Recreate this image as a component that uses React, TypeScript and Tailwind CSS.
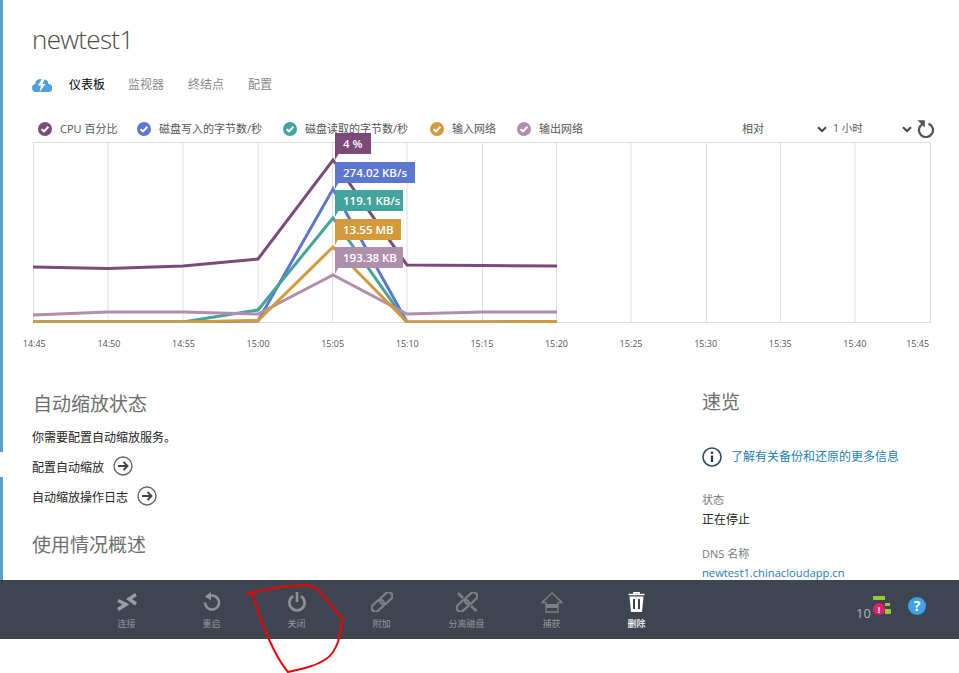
const TIMES = ['14:45', '14:50', '14:55', '15:00', '15:05', '15:10', '15:15', '15:20', '15:25', '15:30', '15:35', '15:40'];
const GRID_X = [108, 183, 258, 332.5, 407, 482.5, 556.5, 631, 706.5, 780.5, 855];

const LEGEND = [
  { label: 'CPU 百分比', cls: 'bg-[#7b4a78]', width: 'w-[99px]' },
  { label: '磁盘写入的字节数/秒', cls: 'bg-[#5b77cf]', width: 'w-[146px]' },
  { label: '磁盘读取的字节数/秒', cls: 'bg-[#42a49c]', width: 'w-[147px]' },
  { label: '输入网络', cls: 'bg-[#d29a3b]', width: 'w-[87px]' },
  { label: '输出网络', cls: 'bg-[#b08fad]', width: 'w-[86px]' },
];

const SERIES = [
  { color: '#7b4a78', points: '33,267 108,268.5 183,266 258,259 333,160 407,265 482,265.5 557,266' },
  { color: '#5b77cf', points: '33,322 108,322 183,322 258,321 333,189 407,322 482,322 557,321.5' },
  { color: '#42a49c', points: '33,322 108,322 183,322 258,310 333,218 407,323 482,322.5 557,322' },
  { color: '#b08fad', points: '33,315 108,312 183,312 258,314 333,275 407,314 482,312 557,312' },
  { color: '#d29a3b', points: '33,322 108,322 183,322 258,320.5 333,247 407,322 482,322 557,321.5' },
];

const TIPS = [
  { text: '4 %', top: 'top-[-9px]', width: 'w-[36px]', cls: 'bg-[#7b4a78]' },
  { text: '274.02 KB/s', top: 'top-[20px]', width: 'w-[80px]', cls: 'bg-[#5b77cf]' },
  { text: '119.1 KB/s', top: 'top-[48px]', width: 'w-[68px]', cls: 'bg-[#42a49c]' },
  { text: '13.55 MB', top: 'top-[77px]', width: 'w-[66px]', cls: 'bg-[#d29a3b]' },
  { text: '193.38 KB', top: 'top-[105px]', width: 'w-[68px]', cls: 'bg-[#b08fad]' },
];

function Check({ className }: { className: string }) {
  return (
    <span className={`flex h-[14px] w-[14px] shrink-0 items-center justify-center rounded-full ${className}`}>
      <svg viewBox="0 0 14 14" className="h-[14px] w-[14px]">
        <path d="M3.6 7.2 6 9.4 10.4 4.8" fill="none" stroke="#fff" strokeWidth="2.1" />
      </svg>
    </span>
  );
}

function Chevron() {
  return (
    <svg viewBox="0 0 10 7" className="h-[7px] w-[10px] shrink-0">
      <path d="M1 1.2 5 5 9 1.2" fill="none" stroke="#444" strokeWidth="2" />
    </svg>
  );
}

function ArrowCircle() {
  return (
    <svg viewBox="0 0 20 20" className="h-[20px] w-[20px]">
      <circle cx="10" cy="10" r="9" fill="none" stroke="#666" strokeWidth="1.4" />
      <path d="M5 10H14M10.5 6 14.5 10 10.5 14" fill="none" stroke="#444" strokeWidth="1.9" />
    </svg>
  );
}

function ChainLinks() {
  return (
    <g fill="none" stroke="#7c7f85" strokeWidth="2.3" transform="rotate(-42 11 10)">
      <rect x="-1.5" y="6.2" width="14" height="7.6" rx="3.8" />
      <rect x="9.5" y="6.2" width="14" height="7.6" rx="3.8" />
    </g>
  );
}

function ToolItem({ label, active, children }: { label: string; active?: boolean; children: React.ReactNode }) {
  return (
    <div className="flex w-[85px] flex-col items-center">
      <div className="flex h-[24px] w-[85px] items-center justify-center">{children}</div>
      <span className={`mt-[4px] text-[9px] leading-[12px] ${active ? 'font-medium text-white' : 'text-[#94979d]'}`}>{label}</span>
    </div>
  );
}

export default function App() {
  return (
    <div className="relative h-[673px] w-[959px] overflow-hidden bg-white font-['Open_Sans','Noto_Sans_CJK_SC',sans-serif]">
      <div className="h-[580px] overflow-hidden border-l-[3px] border-[#58a2c9] pl-[29px]">
        <h1 className="pt-[21px] text-[26px] font-light leading-[36px] tracking-[-0.7px] text-[#4a4a4a]">newtest1</h1>

        {/* Tabs */}
        <nav className="mt-[20px] flex h-[16px] items-center text-[12px] text-[#8a8a8a]">
          <svg viewBox="0 0 20 14" className="h-[14px] w-[20px]">
            <path d="M4 14a4 4 0 0 1-.8-7.9A5 5 0 0 1 8 1c1 0 1.8.2 2.6.7A4.5 4.5 0 0 1 16.5 6 4 4 0 0 1 16 14Z" fill="#4f9fd8" />
            <path d="M10.5 0 6 7.5h3L7.5 14 13.5 6h-3l2.5-6Z" fill="#fff" />
          </svg>
          <span className="ml-[17px] text-black">仪表板</span>
          <span className="ml-[23px]">监视器</span>
          <span className="ml-[24px]">终结点</span>
          <span className="ml-[24px]">配置</span>
        </nav>

        {/* Legend */}
        <div className="ml-[6px] mt-[28px] flex h-[16px] items-center text-[11px] text-[#555]">
          {LEGEND.map((item) => (
            <div key={item.label} className={`flex items-center gap-[8px] ${item.width}`}>
              <Check className={item.cls} />
              <span>{item.label}</span>
            </div>
          ))}
          <span className="ml-[139px] w-[75px] shrink-0">相对</span>
          <Chevron />
          <span className="ml-[6px] w-[69px] shrink-0 text-[10.5px]">1 小时</span>
          <Chevron />
          <svg viewBox="0 0 17 18" className="ml-[5px] h-[18px] w-[17px] shrink-0">
            <path d="M5.2 4.2A7 7 0 1 0 11.5 3.6" fill="none" stroke="#555" strokeWidth="2.3" />
            <path d="M0.5 0.3 7.8 0.3 7.8 7.5Z" fill="#555" />
          </svg>
        </div>

        {/* Chart */}
        <div className="relative ml-px mt-[5px] h-[181px] w-[898px]">
          <svg viewBox="33 142 898 181" className="block h-[181px] w-[898px]">
            <rect x="33.5" y="142.5" width="897" height="180" fill="none" stroke="#dedede" />
            {GRID_X.map((x) => (
              <line key={x} x1={x} x2={x} y1="142" y2="322" stroke="#dedede" />
            ))}
            {SERIES.map((s) => (
              <polyline key={s.color} points={s.points} fill="none" stroke={s.color} strokeWidth="3" />
            ))}
            <path d="M335 153 339 153 335 160Z" fill="#7b4a78" />
            <path d="M335 182 339 182 335 189Z" fill="#5b77cf" />
            <path d="M335 210 339 210 335 217Z" fill="#42a49c" />
            <path d="M335 238 339 238 335 245Z" fill="#d29a3b" />
            <path d="M335 267 339 267 335 274Z" fill="#b08fad" />
          </svg>
          {TIPS.map((tip) => (
            <div
              key={tip.text}
              className={`absolute left-[302px] h-[21px] pl-[8px] text-[11.5px] font-semibold leading-[21px] text-white ${tip.top} ${tip.width} ${tip.cls}`}
            >
              {tip.text}
            </div>
          ))}
        </div>

        {/* Time axis */}
        <div className="ml-[-35px] mt-[14px] flex h-[14px] text-[9px] leading-[14px] text-[#555]">
          {TIMES.map((t) => (
            <span key={t} className="w-[74.6px] shrink-0 text-center">{t}</span>
          ))}
          <span className="w-[51px] shrink-0 text-center">15:45</span>
        </div>

        <div className="mt-[40px] flex">
          <div className="w-[670px]">
            <h2 className="pl-px text-[19px] leading-[26px] text-[#6e6e6e]">自动缩放状态</h2>
            <p className="mt-[13px] text-[12px] leading-[16px] text-[#222]">你需要配置自动缩放服务。</p>
            <div className="mt-[10px] flex h-[20px] items-center gap-[9px] text-[12px] text-[#222]">
              <span className="pt-[3px]">配置自动缩放</span>
              <ArrowCircle />
            </div>
            <div className="mt-[10px] flex h-[20px] items-center gap-[9px] text-[12px] text-[#222]">
              <span className="pt-[3px]">自动缩放操作日志</span>
              <ArrowCircle />
            </div>
            <h2 className="mt-[26px] text-[19px] leading-[26px] text-[#6e6e6e]">使用情况概述</h2>
          </div>
          <div className="-mt-[2px] flex-1">
            <h2 className="text-[19px] leading-[26px] text-[#6e6e6e]">速览</h2>
            <div className="mt-[32px] flex h-[20px] items-center gap-[9px] text-[12px] text-[#1c80b6]">
              <svg viewBox="0 0 20 20" className="h-[20px] w-[20px]">
                <circle cx="10" cy="10" r="9" fill="none" stroke="#2f4a5e" strokeWidth="1.6" />
                <circle cx="10" cy="5.8" r="1.3" fill="#22384a" />
                <path d="M10 8.5V15" stroke="#22384a" strokeWidth="2.2" />
              </svg>
              <span>了解有关备份和还原的更多信息</span>
            </div>
            <p className="mt-[25px] text-[11px] leading-[16px] text-[#777]">状态</p>
            <p className="mt-[4px] text-[12px] leading-[16px] text-[#222]">正在停止</p>
            <p className="mt-[18px] text-[11px] leading-[16px] text-[#777]">DNS 名称</p>
            <p className="mt-[3px] text-[11.2px] leading-[16px] text-[#1c80b6]">newtest1.chinacloudapp.cn</p>
          </div>
        </div>
      </div>

      {/* notch in the left edge */}
      <div className="absolute left-0 top-[452px] h-[25px] w-[3px] bg-white" />

      {/* Toolbar */}
      <div className="flex h-[59px] items-start bg-[#3e4551] pl-[84px] pt-[10px]">
        <ToolItem label="连接">
          <svg viewBox="0 0 20 18" className="h-[18px] w-[20px]">
            <path d="M1 7.5 9 11.5 1 16.5M19 1.5 12 6 19 11" fill="none" stroke="#9a9da3" strokeWidth="3.4" />
          </svg>
        </ToolItem>
        <ToolItem label="重启">
          <svg viewBox="0 0 18 20" className="h-[20px] w-[18px]">
            <path d="M5 4.8A7 7 0 1 1 2 10.5" fill="none" stroke="#8f9297" strokeWidth="2.6" />
            <path d="M8 0 8 8.5 2 4.5Z" fill="#8f9297" />
          </svg>
        </ToolItem>
        <ToolItem label="关闭">
          <svg viewBox="0 0 18 20" className="h-[20px] w-[18px]">
            <path d="M5.2 4.2A7.6 7.6 0 1 0 12.8 4.2" fill="none" stroke="#8f9297" strokeWidth="2.6" />
            <path d="M9 0V10" stroke="#8f9297" strokeWidth="2.6" />
          </svg>
        </ToolItem>
        <ToolItem label="附加">
          <svg viewBox="0 0 22 20" className="h-[20px] w-[22px]">
            <ChainLinks />
          </svg>
        </ToolItem>
        <ToolItem label="分离磁盘">
          <svg viewBox="0 0 22 20" className="h-[20px] w-[22px]">
            <ChainLinks />
            <path d="M2 1 7 6M15 14 20.5 19" stroke="#7c7f85" strokeWidth="2.6" />
          </svg>
        </ToolItem>
        <ToolItem label="捕获">
          <svg viewBox="0 0 22 21" className="h-[21px] w-[22px]">
            <path d="M11 1 1 10.5H5V20H17V10.5H21Z" fill="none" stroke="#7c7f85" strokeWidth="1.3" />
            <path d="M5 12H17V16H5Z" fill="#7c7f85" />
          </svg>
        </ToolItem>
        <ToolItem label="删除" active>
          <svg viewBox="0 0 17 20" className="h-[20px] w-[17px]">
            <path d="M0.5 2.5H16.5M6 2V0.8H11V2" fill="none" stroke="#fff" strokeWidth="1.6" />
            <path d="M1.5 4.5H15.5L14 20H3Z" fill="#fff" />
            <path d="M6 7V17M11 7V17" stroke="#3e4551" strokeWidth="2" />
          </svg>
        </ToolItem>

        <div className="ml-[177px] mt-[1px] flex items-center">
          <span className="mt-[14px] w-[17px] text-[13px] leading-[16px] text-[#b4b7bb]">10</span>
          <div className="relative h-[20px] w-[18px]">
            <div className="absolute left-0 top-0 h-[4px] w-[12px] bg-[#9bc53d]" />
            <div className="absolute left-[12px] top-[7px] h-[3px] w-[5px] bg-[#9bc53d]" />
            <div className="absolute left-[12px] top-[13px] h-[5px] w-[6px] bg-[#9bc53d]" />
            <div className="absolute left-0 top-[7px] flex h-[12px] w-[12px] items-center justify-center rounded-full bg-[#e0206e] text-[9px] font-bold leading-none text-white">!</div>
          </div>
          <div className="ml-[17px] flex h-[18px] w-[18px] items-center justify-center rounded-full bg-[#3ea2ea] text-[14px] font-bold leading-none text-white">?</div>
        </div>
      </div>

      {/* Red hand-drawn annotation on the screenshot */}
      <svg viewBox="0 0 959 673" className="pointer-events-none absolute inset-0 h-[673px] w-[959px]">
        <path
          d="M246 595C250 591 256 592 263 591C267 590 269 588 274 588C282 587 297 585 307 585C313 586 316 589 320 592L342 618C342 626 341 632 338 642C335 650 331 656 326 659C316 666 302 669 288 672C282 665 278 658 273 648C265 632 259 616 252 593"
          fill="none"
          stroke="#f00000"
          strokeWidth="2"
        />
      </svg>
    </div>
  );
}
